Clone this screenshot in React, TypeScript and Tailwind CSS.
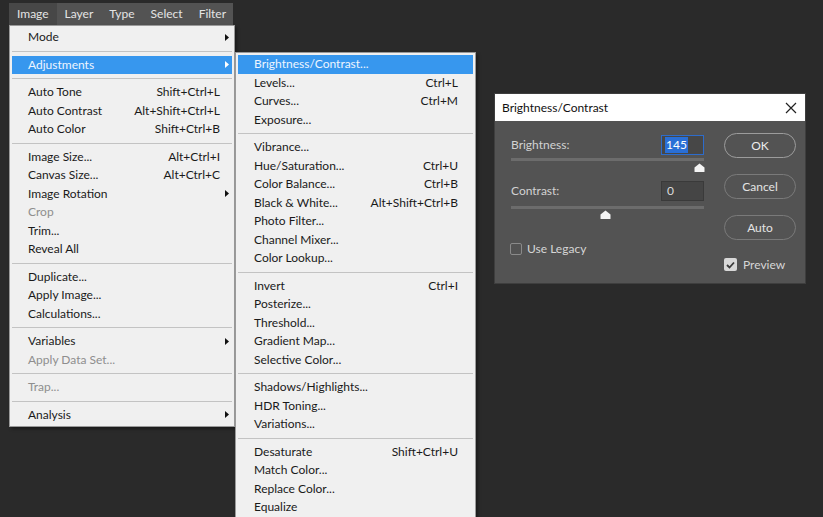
import React from "react";

type Item =
  | { sep: true }
  | { label: string; shortcut?: string; arrow?: boolean; disabled?: boolean; active?: boolean };

const mainItems: Item[] = [
  { label: "Mode", arrow: true },
  { sep: true },
  { label: "Adjustments", arrow: true, active: true },
  { sep: true },
  { label: "Auto Tone", shortcut: "Shift+Ctrl+L" },
  { label: "Auto Contrast", shortcut: "Alt+Shift+Ctrl+L" },
  { label: "Auto Color", shortcut: "Shift+Ctrl+B" },
  { sep: true },
  { label: "Image Size...", shortcut: "Alt+Ctrl+I" },
  { label: "Canvas Size...", shortcut: "Alt+Ctrl+C" },
  { label: "Image Rotation", arrow: true },
  { label: "Crop", disabled: true },
  { label: "Trim..." },
  { label: "Reveal All" },
  { sep: true },
  { label: "Duplicate..." },
  { label: "Apply Image..." },
  { label: "Calculations..." },
  { sep: true },
  { label: "Variables", arrow: true },
  { label: "Apply Data Set...", disabled: true },
  { sep: true },
  { label: "Trap...", disabled: true },
  { sep: true },
  { label: "Analysis", arrow: true },
];

const subItems: Item[] = [
  { label: "Brightness/Contrast...", active: true },
  { label: "Levels...", shortcut: "Ctrl+L" },
  { label: "Curves...", shortcut: "Ctrl+M" },
  { label: "Exposure..." },
  { sep: true },
  { label: "Vibrance..." },
  { label: "Hue/Saturation...", shortcut: "Ctrl+U" },
  { label: "Color Balance...", shortcut: "Ctrl+B" },
  { label: "Black & White...", shortcut: "Alt+Shift+Ctrl+B" },
  { label: "Photo Filter..." },
  { label: "Channel Mixer..." },
  { label: "Color Lookup..." },
  { sep: true },
  { label: "Invert", shortcut: "Ctrl+I" },
  { label: "Posterize..." },
  { label: "Threshold..." },
  { label: "Gradient Map..." },
  { label: "Selective Color..." },
  { sep: true },
  { label: "Shadows/Highlights..." },
  { label: "HDR Toning..." },
  { label: "Variations..." },
  { sep: true },
  { label: "Desaturate", shortcut: "Shift+Ctrl+U" },
  { label: "Match Color..." },
  { label: "Replace Color..." },
  { label: "Equalize" },
];

function Arrow({ white }: { white?: boolean }) {
  return (
    <svg width="4" height="7" viewBox="0 0 4 7">
      <polygon points="0,0 4,3.5 0,7" fill={white ? "#ffffff" : "#111111"} />
    </svg>
  );
}

function MenuList({ items, arrowW }: { items: Item[]; arrowW: string }) {
  return (
    <>
      {items.map((it, i) => {
        if ("sep" in it) {
          return (
            <div key={i} className="h-[9px] mx-[2px] flex items-center">
              <div className="w-full h-px bg-[#c3c3c3]" />
            </div>
          );
        }
        const color = it.active
          ? "text-[#eef5ff]"
          : it.disabled
          ? "text-[#8e8e8e]"
          : "text-[#1a1a1a]";
        return (
          <div
            key={i}
            className={`h-[18.5px] mx-[2px] flex items-center pl-[16px] ${color} ${
              it.active ? "bg-[#3797ee]" : ""
            }`}
          >
            <span className="flex-1 whitespace-nowrap">{it.label}</span>
            {it.shortcut && <span className="whitespace-nowrap">{it.shortcut}</span>}
            <span className={`${arrowW} flex items-center justify-end pr-[3px]`}>
              {it.arrow && <Arrow white={it.active} />}
            </span>
          </div>
        );
      })}
    </>
  );
}

function Thumb() {
  return (
    <svg width="11" height="9" viewBox="0 0 11 9">
      <path d="M5.5 0.5 L10.5 4.5 L10.5 8.5 Q10.5 9 10 9 L1 9 Q0.5 9 0.5 8.5 L0.5 4.5 Z" fill="#f4f4f4" />
    </svg>
  );
}

export default function App() {
  return (
    <div className="relative w-[823px] h-[517px] bg-[#2a2a2a] overflow-hidden font-['Lato','Liberation_Sans',sans-serif] text-[12px] leading-none">
      {/* Menu bar */}
      <div className="absolute left-[9px] top-[3px] w-[224px] h-[22px] bg-[#535353] flex items-stretch text-[#e4e4e4]">
        <div className="px-[8px] flex items-center bg-[#474747]">Image</div>
        <div className="px-[8px] flex items-center">Layer</div>
        <div className="px-[8px] flex items-center">Type</div>
        <div className="px-[8px] flex items-center">Select</div>
        <div className="px-[8px] flex items-center">Filter</div>
      </div>

      {/* Main Image menu */}
      <div className="absolute left-[9px] top-[25px] w-[226px] bg-[#f0f0f0] border border-[#9a9a9a] py-[2px] shadow-[2px_2px_3px_rgba(0,0,0,0.35)]">
        <MenuList items={mainItems} arrowW="w-[12px]" />
      </div>

      {/* Adjustments submenu */}
      <div className="absolute left-[235px] top-[52px] w-[241px] bg-[#f0f0f0] border border-[#9a9a9a] py-[2px] shadow-[2px_2px_3px_rgba(0,0,0,0.35)]">
        <MenuList items={subItems} arrowW="w-[15px]" />
      </div>

      {/* Brightness/Contrast dialog */}
      <div className="absolute left-[494px] top-[93px] w-[312px] flex flex-col border border-[#3e3e3e]">
        <div className="h-[27px] bg-white flex items-center justify-between pl-[7px] pr-[8px] text-[#111]">
          <span>Brightness/Contrast</span>
          <svg width="12" height="12" viewBox="0 0 12 12">
            <path d="M1 1 L11 11 M11 1 L1 11" stroke="#222" strokeWidth="1.2" />
          </svg>
        </div>
        <div className="h-[162px] bg-[#535353] flex">
          {/* Left controls */}
          <div className="ml-[16px] w-[193px] pt-[14px] flex flex-col">
            <div className="h-[20px] flex items-center justify-between">
              <span className="text-[#d2d2d2]">Brightness:</span>
              <div className="w-[43px] h-[20px] bg-[#474747] border border-[#2d6ccc] flex items-center pl-[3px]">
                <span className="bg-[#2a6fd6] text-white px-[1px] py-[2px]">145</span>
              </div>
            </div>
            <div className="relative mt-[3px] h-[14px]">
              <div className="h-[3px] w-full bg-[#6c6c6c]" />
              <div className="absolute left-[183px] top-[5px]">
                <Thumb />
              </div>
            </div>
            <div className="mt-[9px] h-[20px] flex items-center justify-between">
              <span className="text-[#d2d2d2]">Contrast:</span>
              <div className="w-[43px] h-[20px] bg-[#454545] border border-[#3a3a3a] flex items-center pl-[5px] text-[#dcdcdc]">
                0
              </div>
            </div>
            <div className="relative mt-[5px] h-[13px]">
              <div className="h-[3px] w-full bg-[#6c6c6c]" />
              <div className="absolute left-[89px] top-[4px]">
                <Thumb />
              </div>
            </div>
            <div className="mt-[24px] flex items-center -ml-[1px]">
              <div className="w-[12px] h-[12px] border border-[#8a8a8a] rounded-[2px]" />
              <span className="ml-[5px] text-[#d6d6d6]">Use Legacy</span>
            </div>
          </div>
          {/* Right buttons */}
          <div className="ml-[20px] w-[72px] pt-[12px] flex flex-col">
            <div className="h-[25px] rounded-full border border-[#9c9c9c] flex items-center justify-center text-[#ececec]">OK</div>
            <div className="mt-[16px] h-[25px] rounded-full border border-[#7a7a7a] flex items-center justify-center text-[#e4e4e4]">Cancel</div>
            <div className="mt-[16px] h-[25px] rounded-full border border-[#7a7a7a] flex items-center justify-center text-[#e4e4e4]">Auto</div>
            <div className="mt-[18px] flex items-center">
              <div className="w-[13px] h-[13px] bg-[#d8d8d8] rounded-[2px] flex items-center justify-center">
                <svg width="9" height="8" viewBox="0 0 9 8">
                  <path d="M1 4 L3.5 6.5 L8 1.5" stroke="#3a3a3a" strokeWidth="1.8" fill="none" />
                </svg>
              </div>
              <span className="ml-[6px] text-[#d6d6d6]">Preview</span>
            </div>
          </div>
        </div>
      </div>
    </div>
  );
}
